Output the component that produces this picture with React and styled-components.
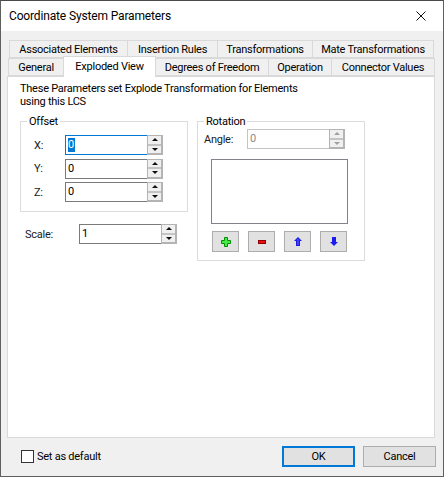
import React from "react";
import styled, { createGlobalStyle } from "styled-components";

const GlobalStyle = createGlobalStyle`
  html, body {
    margin: 0;
    padding: 0;
    background: #f0f0f0;
  }
  * {
    box-sizing: border-box;
  }
`;

const Window = styled.div`
  width: 444px;
  height: 477px;
  display: flex;
  flex-direction: column;
  background: #f0f0f0;
  border: 1px solid #5f5f5f;
  border-top-color: #4a4a4a;
  font-family: "Roboto", "Noto Sans", sans-serif;
  font-size: 11px;
  letter-spacing: -0.25px;
  color: #000;
  overflow: hidden;
`;

const TitleBar = styled.div`
  height: 30px;
  flex: none;
  display: flex;
  align-items: center;
  justify-content: space-between;
  padding-left: 8px;
  background: #fff;
  font-size: 12px;
  letter-spacing: -0.15px;
`;

const CloseButton = styled.div`
  width: 46px;
  height: 30px;
  display: flex;
  align-items: center;
  justify-content: center;
  padding-left: 1px;
`;

const Body = styled.div`
  flex: 1;
  display: flex;
  flex-direction: column;
  padding: 9px 8px 0 6px;
`;

const TabRow = styled.div`
  display: flex;
  height: ${(p) => p.$height}px;
  padding-left: ${(p) => p.$inset}px;
  align-items: flex-end;
  position: relative;
`;

const Tab = styled.div`
  width: ${(p) => p.$width}px;
  height: ${(p) => (p.$active ? 21 : 18)}px;
  display: flex;
  align-items: center;
  justify-content: center;
  background: ${(p) => (p.$active ? "#fff" : "#f0f0f0")};
  border: 1px solid #d9d9d9;
  border-bottom: ${(p) => (p.$active ? "none" : "1px solid #d9d9d9")};
  margin-left: -1px;
  padding-top: ${(p) => (p.$active ? 0 : 1)}px;
  padding-bottom: ${(p) => (p.$active ? 2 : 0)}px;
  white-space: nowrap;
  position: relative;
  z-index: ${(p) => (p.$active ? 2 : 0)};
  margin-bottom: ${(p) => (p.$active ? -1 : 0)}px;
`;

const Panel = styled.div`
  height: 362px;
  background: #fff;
  border: 1px solid #d9d9d9;
  padding: 5px 0 0 12px;
`;

const Intro = styled.p`
  margin: 0;
  line-height: 13px;
  width: 300px;
`;

const Columns = styled.div`
  display: flex;
  align-items: flex-start;
  margin-top: 7px;
  gap: 9px;
`;

const LeftColumn = styled.div`
  display: flex;
  flex-direction: column;
`;

const Group = styled.fieldset`
  margin: 0;
  padding: 0;
  width: ${(p) => p.$width}px;
  height: ${(p) => p.$height}px;
  border: 1px solid #dcdcdc;
  border-radius: 0;
  min-inline-size: 0;
`;

const Legend = styled.legend`
  margin-left: 6px;
  padding: 0 2px;
  line-height: 13px;
`;

const OffsetRows = styled.div`
  display: flex;
  flex-direction: column;
  gap: 3.5px;
  padding: 7px 0 0 13px;
`;

const FieldRow = styled.div`
  display: flex;
  align-items: center;
`;

const FieldLabel = styled.span`
  width: ${(p) => p.$width}px;
  flex: none;
  color: #1a1a1a;
`;

const SpinBox = styled.div`
  width: 98px;
  height: 20px;
  display: flex;
  background: #fff;
  border: 1px solid ${(p) => (p.$focused ? "#0078d7" : p.$disabled ? "#c4c4c4" : "#7a7a7a")};
  border-right-color: #b4b4b4;
`;

const SpinValue = styled.div`
  flex: 1;
  padding: 2px 0 0 2px;
  line-height: 14px;
  color: ${(p) => (p.$disabled ? "#8a8a8a" : "#000")};
`;

const Selected = styled.span`
  display: inline-block;
  background: #0078d7;
  color: #fff;
  width: 7px;
  height: 14px;
  line-height: 14px;
`;

const SpinButtons = styled.div`
  width: 16px;
  flex: none;
  display: flex;
  flex-direction: column;
  gap: 2px;
  background: #c4c4c4;
  margin: -1px -1px -1px 0;
  border: 1px solid #b4b4b4;
  border-width: 1px 2px 2px 1px;
`;

const SpinArrow = styled.div`
  flex: 1;
  display: flex;
  align-items: center;
  justify-content: center;
  background: #f0f0f0;
`;

const Triangle = styled.span`
  width: 0;
  height: 0;
  border-left: 3.5px solid transparent;
  border-right: 3.5px solid transparent;
  border-${(p) => (p.$down ? "top" : "bottom")}: 3px solid ${(p) => (p.$disabled ? "#a0a0a0" : "#111")};
`;

const ScaleRow = styled(FieldRow)`
  margin: 12px 0 0 5px;
`;

const AngleRow = styled(FieldRow)`
  margin: 1px 0 0 6px;
`;

const ListBox = styled.div`
  width: 137px;
  height: 65px;
  margin: 10px 0 0 13px;
  background: #fff;
  border: 1px solid #82828a;
`;

const ToolRow = styled.div`
  display: flex;
  gap: 9px;
  margin: 7px 0 0 14px;
`;

const ToolButton = styled.div`
  width: 27px;
  height: 21px;
  display: flex;
  align-items: center;
  justify-content: center;
  background: #e1e1e1;
  border: 1px solid #adadad;
`;

const Footer = styled.div`
  flex: 1;
  display: flex;
  align-items: center;
  justify-content: space-between;
  padding: 0 0 2px 14px;
`;

const CheckField = styled.div`
  display: flex;
  align-items: center;
  gap: 3px;
`;

const CheckBox = styled.span`
  width: 13px;
  height: 13px;
  background: #fff;
  border: 1px solid #333;
`;

const ButtonRow = styled.div`
  display: flex;
  gap: 8px;
  margin-right: -1px;
`;

const DialogButton = styled.div`
  width: 73px;
  height: 21px;
  display: flex;
  align-items: center;
  justify-content: center;
  background: #e1e1e1;
  border: ${(p) => (p.$primary ? "2px solid #0078d7" : "1px solid #adadad")};
`;

function Spin({ value, focused, disabled }) {
  return (
    <SpinBox $focused={focused} $disabled={disabled}>
      <SpinValue $disabled={disabled}>
        {focused ? <Selected>{value}</Selected> : value}
      </SpinValue>
      <SpinButtons>
        <SpinArrow>
          <Triangle $disabled={disabled} />
        </SpinArrow>
        <SpinArrow>
          <Triangle $down $disabled={disabled} />
        </SpinArrow>
      </SpinButtons>
    </SpinBox>
  );
}

const PlusIcon = () => (
  <svg width="10" height="10" viewBox="0 0 10 10">
    <path d="M3.500 .5h3v3h3v3h-3v3h-3v-3h-3v-3h3z" fill="#4be84b" stroke="#009000" />
  </svg>
);

const MinusIcon = () => (
  <svg width="8" height="4" viewBox="0 0 8 4">
    <rect x=".5" y=".5" width="7" height="3" fill="#e81010" stroke="#900000" />
  </svg>
);

const ArrowUpIcon = () => (
  <svg width="8" height="9" viewBox="0 0 8 9">
    <path d="M4 0L8 4H6v5H2V4H0z" fill="#1c1ce8" />
    <path d="M3.500 2h1v6h-1z" fill="#6a6aff" />
  </svg>
);

const ArrowDownIcon = () => (
  <svg width="8" height="9" viewBox="0 0 8 9">
    <path d="M2 0h4v5h2L4 9 0 5h2z" fill="#1c1cf0" />
  </svg>
);

const upperTabs = [
  ["Associated Elements", 119],
  ["Insertion Rules", 91],
  ["Transformations", 96],
  ["Mate Transformations", 122],
];

const lowerTabs = [
  ["General", 56],
  ["Exploded View", 93, true],
  ["Degrees of Freedom", 114],
  ["Operation", 64],
  ["Connector Values", 104],
];

function App() {
  return (
    <>
      <GlobalStyle />
      <Window>
        <TitleBar>
          Coordinate System Parameters
          <CloseButton>
            <svg width="10" height="10" viewBox="0 0 10 10">
              <path d="M.5 .5l9 9M9.500 .5l-9 9" stroke="#111" fill="none" />
            </svg>
          </CloseButton>
        </TitleBar>
        <Body>
          <TabRow $height={18} $inset={3}>
            {upperTabs.map(([label, width]) => (
              <Tab key={label} $width={width}>{label}</Tab>
            ))}
          </TabRow>
          <TabRow $height={18} $inset={2}>
            {lowerTabs.map(([label, width, active]) => (
              <Tab key={label} $width={width} $active={active}>{label}</Tab>
            ))}
          </TabRow>
          <Panel>
            <Intro>These Parameters set Explode Transformation for Elements using this LCS</Intro>
            <Columns>
              <LeftColumn>
                <Group $width={168} $height={97}>
                  <Legend>Offset</Legend>
                  <OffsetRows>
                    <FieldRow>
                      <FieldLabel $width={31}>X:</FieldLabel>
                      <Spin value="0" focused />
                    </FieldRow>
                    <FieldRow>
                      <FieldLabel $width={31}>Y:</FieldLabel>
                      <Spin value="0" />
                    </FieldRow>
                    <FieldRow>
                      <FieldLabel $width={31}>Z:</FieldLabel>
                      <Spin value="0" />
                    </FieldRow>
                  </OffsetRows>
                </Group>
                <ScaleRow>
                  <FieldLabel $width={54}>Scale:</FieldLabel>
                  <Spin value="1" />
                </ScaleRow>
              </LeftColumn>
              <Group $width={168} $height={146}>
                <Legend>Rotation</Legend>
                <AngleRow>
                  <FieldLabel $width={43}>Angle:</FieldLabel>
                  <Spin value="0" disabled />
                </AngleRow>
                <ListBox />
                <ToolRow>
                  <ToolButton><PlusIcon /></ToolButton>
                  <ToolButton><MinusIcon /></ToolButton>
                  <ToolButton><ArrowUpIcon /></ToolButton>
                  <ToolButton><ArrowDownIcon /></ToolButton>
                </ToolRow>
              </Group>
            </Columns>
          </Panel>
          <Footer>
            <CheckField>
              <CheckBox />
              Set as default
            </CheckField>
            <ButtonRow>
              <DialogButton $primary>OK</DialogButton>
              <DialogButton>Cancel</DialogButton>
            </ButtonRow>
          </Footer>
        </Body>
      </Window>
    </>
  );
}

export default App;
